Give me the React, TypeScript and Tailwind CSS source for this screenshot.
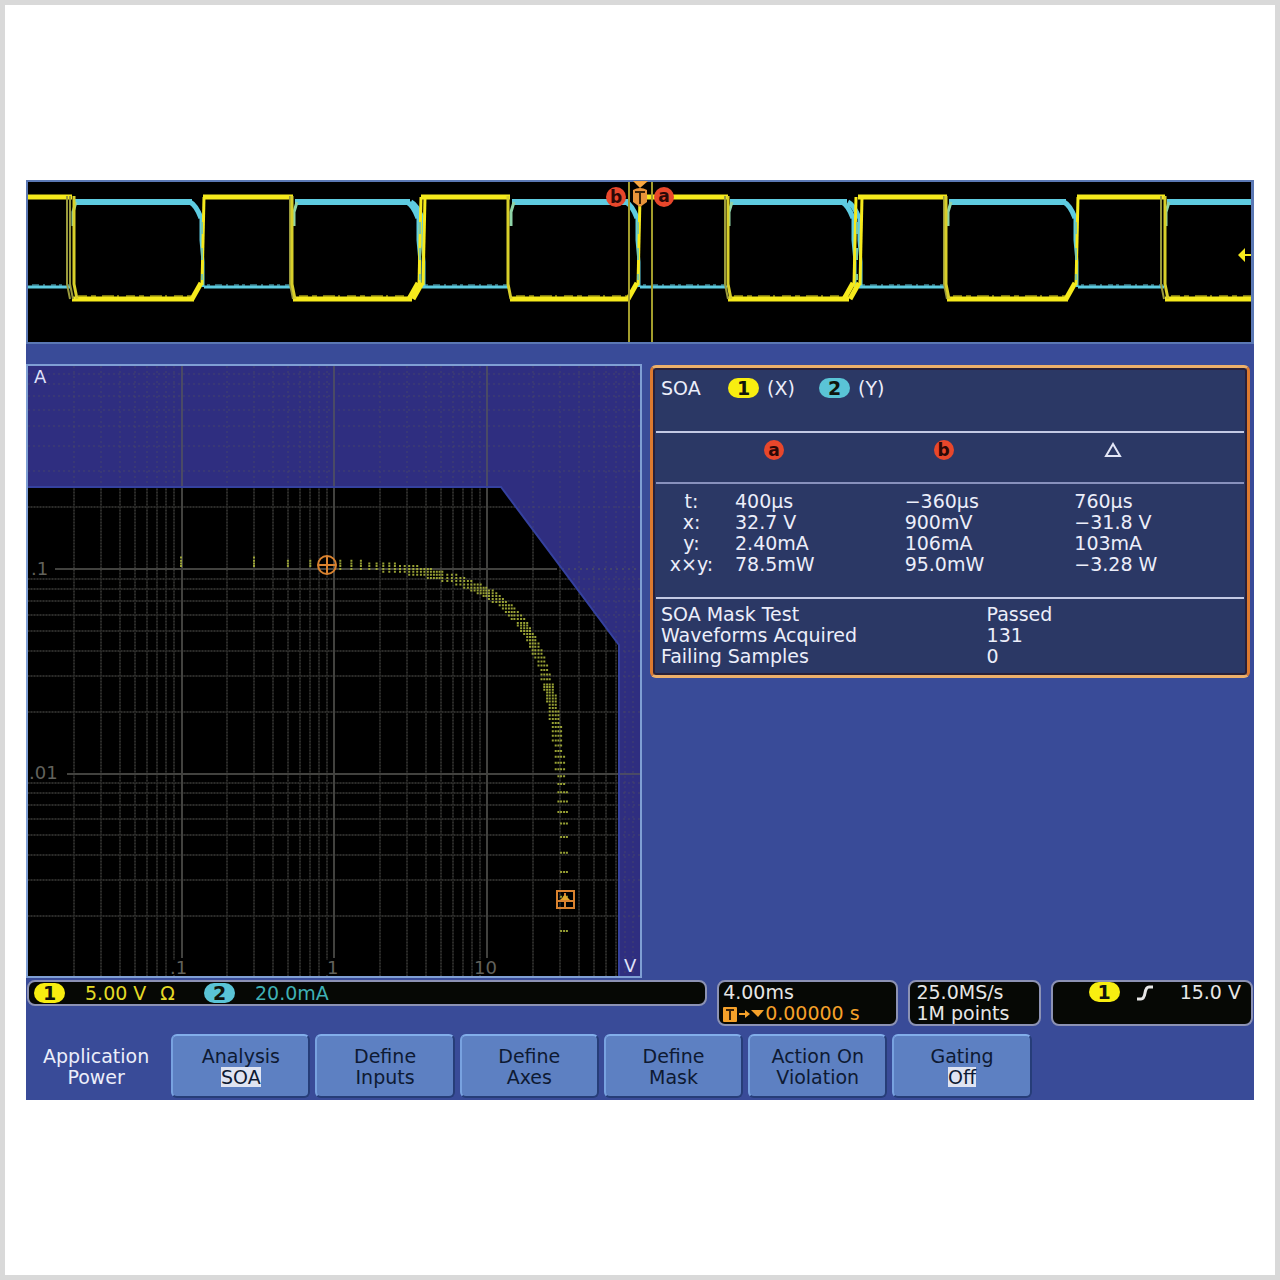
import React from "react";

const YELLOW = "#f6ea1c";
const CYAN = "#5ecbe0";

/* ---------- Overview strip: channel 1 and 2 against time ---------- */

// Each cycle: channel 1 falls, channel 1 rises, and the jitter seen at each edge.
const cycles = [
  { fall: 70, rise: 203, fallJitter: [-3, 0, 4], riseJitter: [0] },
  { fall: 291, rise: 421, fallJitter: [-1, 1], riseJitter: [-1, 3] },
  { fall: 508, rise: 639, fallJitter: [0], riseJitter: [0] },
  { fall: 726, rise: 858, fallJitter: [-1, 2], riseJitter: [-3, 3] },
  { fall: 945, rise: 1077, fallJitter: [-1, 1], riseJitter: [0] },
  { fall: 1163, rise: 1300, fallJitter: [-2, 2], riseJitter: [0] },
];

function Overview() {
  return (
    <svg viewBox="26 180 1228 164" className="block h-auto w-full" role="img" aria-label="Acquired waveforms">
      <rect x="26" y="180" width="1228" height="164" fill="#5b78b4" />
      <rect x="28" y="182" width="1223" height="160" fill="#000" />
      <defs>
        <clipPath id="strip">
          <rect x="28" y="182" width="1223" height="160" />
        </clipPath>
      </defs>
      <g clipPath="url(#strip)" fill="none" strokeLinejoin="round">
        {cycles.map((c, i) => {
          const before = i === 0 ? 20 : cycles[i - 1].rise;
          return (
            <g key={c.fall}>
              <path d={`M${before + 1} 287H${c.fall + 1}`} stroke={CYAN} strokeWidth="3" />
              <path d={`M${before + 4} 285H${c.fall}`} stroke={CYAN} strokeDasharray="3 5 7 4 2 6 5 3" />
              <path d={`M${c.fall + 4} 202H${c.rise - 11}`} stroke={CYAN} strokeWidth="6" />
              <path d={`M${c.fall + 3} 226V212L${c.fall + 6} 202`} stroke="#8fd4a8" strokeWidth="3" />
              {c.riseJitter.map((j) => (
                <g key={j} stroke={CYAN}>
                  <path d={`M${c.rise - 13 + j} 202Q${c.rise - 7 + j} 205 ${c.rise - 2 + j} 218`} strokeWidth="5" />
                  <path d={`M${c.rise - 2 + j} 216V240L${c.rise + j} 262V287`} strokeWidth="3" />
                </g>
              ))}
            </g>
          );
        })}
        {cycles.map((c, i) => {
          const before = i === 0 ? 20 : cycles[i - 1].rise;
          return (
            <g key={c.fall}>
              <path d={`M${before} 197H${c.fall + 2}`} stroke={YELLOW} strokeWidth="5" />
              <path d={`M${c.fall + 2} 299H${c.rise - 9}`} stroke={YELLOW} strokeWidth="5" />
              <path d={`M${c.fall + 8} 296H${c.rise - 12}`} stroke={YELLOW} strokeDasharray="9 4 5 6 12 3 2 7" />
              {c.fallJitter.map((j, k) => (
                <path
                  key={j}
                  d={`M${c.fall + j} 196V284L${c.fall + j + 3} 299`}
                  stroke={k === c.fallJitter.length - 1 ? "#d8cf2a" : "#9a9a3c"}
                  strokeWidth={k === c.fallJitter.length - 1 ? 3 : 2}
                />
              ))}
              {c.riseJitter.map((j) => (
                <g key={j} stroke={YELLOW}>
                  <path d={`M${c.rise - 11 + j} 299L${c.rise - 2 + j} 283`} strokeWidth="5" />
                  <path d={`M${c.rise - 1 + j} 285L${c.rise + 1 + j} 197`} strokeWidth="3" />
                </g>
              ))}
              <path d={`M${c.rise - 1} 222V280`} stroke="#7fc9a0" strokeDasharray="12 14" strokeWidth="2" />
            </g>
          );
        })}
        <path d="M629 182V342M652 182V342" stroke="#a39d2c" strokeWidth="2" />
      </g>
      <path d="M633 181H648L640 188Z" fill="#f7a540" />
      <path d="M633 190Q640 186 647 190V202L640 207L633 202Z" fill="#e8933a" />
      <path d="M635 192H645M640 192V204" stroke="#3a2208" strokeWidth="2" fill="none" />
      <circle cx="616" cy="197" r="10" fill="#e8472b" />
      <circle cx="664" cy="197" r="10" fill="#e8472b" />
      <text x="616" y="203" textAnchor="middle" fontSize="17" fontWeight="700" fill="#2a0806">b</text>
      <text x="664" y="202" textAnchor="middle" fontSize="17" fontWeight="700" fill="#2a0806">a</text>
      <path d="M1238 255L1245 248V254H1251V256H1245V262Z" fill={YELLOW} />
    </svg>
  );
}

/* ---------- Log-log safe operating area plot ---------- */

const toX = (volts: number) => 334 + 153 * Math.log10(volts);
const toY = (amps: number) => 569 - 204.6 * Math.log10(amps / 0.1);
const loadLine = (volts: number) => 0.106 - ((volts - 0.9) * (0.106 - 0.0024)) / (32.7 - 0.9);

function thin(values: number[], gap: number) {
  const kept: number[] = [];
  for (const v of values) {
    if (kept.length === 0 || Math.abs(v - kept[kept.length - 1]) >= gap) kept.push(v);
  }
  return kept;
}

const trace: [number, number][] = [];
for (let v = 0.1; v < 32.92; v *= 1.004) trace.push([toX(v), toY(loadLine(v))]);
for (let v = 30; v < 32.93; v += 0.02) trace.push([toX(v), toY(loadLine(v))]);

const columns = thin(Array.from({ length: 172 }, (_, k) => toX(0.1 + 0.2 * k)), 2.6);
const rows = thin(Array.from({ length: 145 }, (_, k) => toY(0.0017 + 0.0008 * k)), 2.6);

const samples: [number, number][] = [];
for (const x of columns) {
  for (const y of rows) {
    if (trace.some(([tx, ty]) => (tx - x) ** 2 + (ty - y) ** 2 < 26)) samples.push([x, y]);
  }
}

const subdivisions = [2, 3, 4, 5, 6, 7, 8, 9];
const minorX = [28, 181, 334, 487].flatMap((x) => subdivisions.map((k) => Math.round(x + 153 * Math.log10(k)))).filter((x) => x < 639);
const minorY = [978, 774, 569].flatMap((y) => subdivisions.map((k) => Math.round(y - 204.6 * Math.log10(k)))).filter((y) => y > 368);

const MASK = "M28 366H640V976H619V645L501 487H28Z";
const SAFE = "M28 487H501L619 645V976H28Z";

function SoaPlot() {
  const minor = [...minorX.map((x) => `M${x} 366V976`), ...minorY.map((y) => `M28 ${y}H640`)].join("");
  return (
    <svg viewBox="26 364 616 614" className="block h-auto w-full" role="img" aria-label="Safe operating area plot">
      <defs>
        <clipPath id="safe">
          <path d={SAFE} />
        </clipPath>
        <clipPath id="outside">
          <path d={MASK} />
        </clipPath>
      </defs>
      <rect x="26" y="364" width="616" height="614" fill="#7f9fd4" />
      <rect x="28" y="366" width="612" height="610" fill="#000" />
      <path d={MASK} fill="#2f2e80" />
      <g fill="none" strokeWidth="2" clipPath="url(#safe)">
        <path d={minor} stroke="#191918" />
        <path d={minor} stroke="#2b2b29" strokeDasharray="1 2" />
      </g>
      <path d={minor} fill="none" stroke="#484a68" strokeDasharray="2 3" opacity="0.8" clipPath="url(#outside)" />
      <g fill="none" stroke="#42423f" strokeWidth="2">
        <path d="M182 487V958M334 487V958M487 487V958M55 569H557M67 774H619" />
        <path d="M182 366V486M334 366V486M487 366V486M619 774H640" stroke="#4a4a66" />
        <path d="M562 569H640" stroke="#43446c" strokeDasharray="2 4" />
      </g>
      <path d="M28 487H501L619 645V976" fill="none" stroke="#35419f" strokeWidth="2" />
      <path d={samples.map(([x, y]) => `M${(x - 1).toFixed(1)} ${y.toFixed(1)}h2`).join("")} stroke="#a8b23a" strokeWidth="2" opacity="0.9" />
      <g fill="none" stroke="#d9822f" strokeWidth="2">
        <circle cx="327" cy="565" r="9" />
        <path d="M318 565H336M327 556V574" />
        <rect x="557" y="891" width="17" height="17" />
        <path d="M557 901H574M565 893V908" />
      </g>
      <path d="M560 900L565 895L570 900Z" fill="#e0a52c" />
      <g fontSize="18" fill="#62625c">
        <path d="M28 560h26v18H28zM28 764h36v18H28zM168 960h20v15H168zM326 960h13v15H326zM473 960h25v15H473z" fill="#000" />
        <text x="31" y="575">.1</text>
        <text x="29" y="779">.01</text>
        <text x="170" y="974">.1</text>
        <text x="327" y="974">1</text>
        <text x="474" y="974">10</text>
      </g>
      <g fontSize="18" fill="#dfe1fa">
        <text x="34" y="383">A</text>
        <text x="624" y="972">V</text>
      </g>
    </svg>
  );
}

/* ---------- Small parts ---------- */

function Channel({ id, className }: { id: string; className: string }) {
  return (
    <span className={`inline-flex h-5 w-[31px] shrink-0 items-center justify-center rounded-full font-bold text-[#10140c] ${className}`}>
      {id}
    </span>
  );
}

function CursorBadge({ id }: { id: string }) {
  return (
    <span className="flex size-5 items-center justify-center rounded-full bg-[#e8472b] text-[17px] leading-4 font-bold text-[#2a0806]">
      {id}
    </span>
  );
}

const readings = [
  ["t:", "400µs", "−360µs", "760µs"],
  ["x:", "32.7 V", "900mV", "−31.8 V"],
  ["y:", "2.40mA", "106mA", "103mA"],
  ["x×y:", "78.5mW", "95.0mW", "−3.28 W"],
];

const results = [
  ["SOA Mask Test", "Passed"],
  ["Waveforms Acquired", "131"],
  ["Failing Samples", "0"],
];

function ResultsPanel() {
  return (
    <section className="rounded-md border-[3px] border-x-[#dd7a30] border-y-[#edb06a] bg-[#2b3865] px-[3px] text-[#eceefa] shadow-[inset_0_0_0_2px_#2a2038]">
      <h2 className="flex h-[63px] items-start pt-[10px] pl-[5px]">
        <span className="w-[67px]">SOA</span>
        <Channel id="1" className="bg-[#f8ee10]" />
        <span className="w-[60px] pl-2">(X)</span>
        <Channel id="2" className="bg-[#5ac4d6]" />
        <span className="pl-2">(Y)</span>
      </h2>
      <table className="w-full table-fixed border-collapse text-left">
        <colgroup>
          <col className="w-[79px]" />
          <col />
          <col />
          <col />
        </colgroup>
        <thead>
          <tr className="h-[51px] border-t-2 border-b-2 border-t-[#c3c9e4] border-b-[#8891bd] align-top">
            <td />
            <th scope="col" className="pt-[7px] pl-[29px]"><CursorBadge id="a" /></th>
            <th scope="col" className="pt-[7px] pl-[29px]"><CursorBadge id="b" /></th>
            <th scope="col" className="pt-[7px] pl-[29px]">
              <svg viewBox="0 0 20 20" className="block size-5" role="img" aria-label="Delta">
                <path d="M10 4L17 16H3Z" fill="none" stroke="#e3e6f6" strokeWidth="2" />
              </svg>
            </th>
          </tr>
        </thead>
        <tbody>
          {readings.map(([name, a, b, delta], i) => {
            const pad = i === 0 ? "pt-[7px]" : i === readings.length - 1 ? "pb-[22px]" : "";
            return (
              <tr key={name}>
                <th scope="row" className={`pr-2 text-center font-normal ${pad}`}>{name}</th>
                <td className={pad}>{a}</td>
                <td className={pad}>{b}</td>
                <td className={pad}>{delta}</td>
              </tr>
            );
          })}
        </tbody>
      </table>
      <dl className="grid grid-cols-[325fr_257fr] border-t-2 border-[#c3c9e4] pt-[5px] pb-2 pl-[5px]">
        {results.map(([name, value]) => (
          <React.Fragment key={name}>
            <dt>{name}</dt>
            <dd>{value}</dd>
          </React.Fragment>
        ))}
      </dl>
    </section>
  );
}

function StatusBar() {
  const box = "rounded-lg border-2 border-[#8c92b4] bg-[#060805] text-[#e6e6e6]";
  return (
    <div className="grid grid-cols-[679fr_181fr_132fr_202fr] items-start gap-[10px] px-px pt-[2px]">
      <div className={`flex h-[26px] items-center pl-[5px] ${box}`}>
        <Channel id="1" className="bg-[#f8ee10]" />
        <span className="flex w-[139px] gap-[14px] pl-5 text-[#e4da26]">
          <span>5.00 V</span>
          <span>Ω</span>
        </span>
        <Channel id="2" className="bg-[#5ac4d6]" />
        <span className="pl-5 text-[#3fb0b4]">20.0mA</span>
      </div>
      <div className={`h-[46px] pl-1 whitespace-nowrap ${box}`}>
        <div>4.00ms</div>
        <div className="flex items-center text-[#f5a12a]">
          <svg viewBox="0 0 42 16" className="h-4 w-[42px] shrink-0" aria-hidden="true">
            <rect x="0" y="1" width="14" height="15" rx="1" fill="#f5a12a" />
            <path d="M3 4H11M7 4V14" stroke="#3a2208" strokeWidth="2" />
            <path d="M16 7H22V4L27 8L22 12V9H16Z" fill="#f5a12a" />
            <path d="M28 4H41L35 11Z" fill="#f5a12a" />
          </svg>
          0.00000 s
        </div>
      </div>
      <div className={`h-[46px] pl-[6px] whitespace-nowrap ${box}`}>
        <div>25.0MS/s</div>
        <div>1M points</div>
      </div>
      <div className={`flex h-[46px] items-start justify-end pr-[10px] ${box}`}>
        <Channel id="1" className="bg-[#f8ee10]" />
        <svg viewBox="0 0 16 16" className="mt-[3px] mr-[27px] ml-[17px] size-4" role="img" aria-label="Rising edge">
          <path d="M0 14H4Q7 14 8 8Q9 2 12 2H16" fill="none" stroke="#e6e6e6" strokeWidth="3" />
        </svg>
        <span>15.0 V</span>
      </div>
    </div>
  );
}

const menu = [
  { top: "Analysis", bottom: "SOA", value: true },
  { top: "Define", bottom: "Inputs", value: false },
  { top: "Define", bottom: "Axes", value: false },
  { top: "Define", bottom: "Mask", value: false },
  { top: "Action On", bottom: "Violation", value: false },
  { top: "Gating", bottom: "Off", value: true },
];

function SoftMenu() {
  return (
    <nav className="grid grid-cols-[140fr_repeat(6,139fr)_217fr] gap-[5px] pt-2 pb-[2px] text-center whitespace-nowrap">
      <div className="pt-3 text-[#eceefa]">
        <div>Application</div>
        <div>Power</div>
      </div>
      {menu.map((item) => (
        <button
          key={item.top + item.bottom}
          type="button"
          className="h-16 rounded-md border-2 border-t-[#82aeea] border-r-[#263d78] border-b-[#263d78] border-l-[#78a2e0] bg-[#5d80c2] pt-0.5 text-[#0e1a33]"
        >
          <span className="block">{item.top}</span>
          <span className="block">
            {item.value ? <span className="inline-block h-[20px] bg-[#dfe4f2] leading-[20px]">{item.bottom}</span> : item.bottom}
          </span>
        </button>
      ))}
    </nav>
  );
}

export default function App() {
  return (
    <div className="flex min-h-screen flex-col justify-center border-[5px] border-[#d9d9d9] bg-white px-[21px] font-['DejaVu_Sans',sans-serif] text-[19px] leading-[21px]">
      <main className="bg-[#394b98]">
        <Overview />
        <div className="grid grid-cols-[616fr_600fr] items-start gap-x-2 pt-5 pr-1">
          <SoaPlot />
          <div className="pt-px">
            <ResultsPanel />
          </div>
        </div>
        <StatusBar />
        <SoftMenu />
      </main>
    </div>
  );
}
